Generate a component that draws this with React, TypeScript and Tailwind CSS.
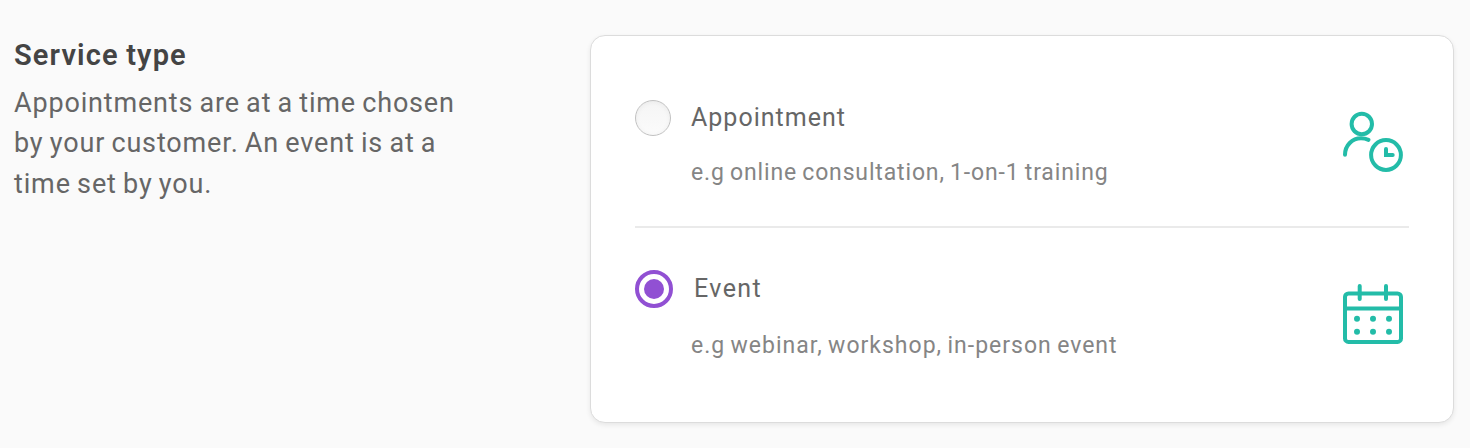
import type { ReactNode } from "react";

function AppointmentIcon() {
  return (
    <svg width="64" height="64" viewBox="0 0 64 64" fill="none" stroke="#23bca8" strokeWidth="4" strokeLinecap="round">
      <circle cx="20.8" cy="14" r="10.2" />
      <path d="M4 44.800C4 35.500 11.200 28.200 20 28.200C22.700 28.200 25.200 28.800 27.500 29.800" />
      <circle cx="45" cy="45" r="14.900" />
      <path d="M45 39V45H51.700" strokeLinejoin="miter" />
    </svg>
  );
}

function CalendarIcon() {
  return (
    <svg width="64" height="64" viewBox="0 0 64 64" fill="none" stroke="#23bca8" strokeWidth="4" strokeLinecap="round">
      <rect x="4" y="11.400" width="56" height="48.500" rx="3.500" />
      <path d="M4 26.500H60M18.700 4V17M45 4V17" />
      <g fill="#23bca8" stroke="none">
        <circle cx="16" cy="36.700" r="3" />
        <circle cx="32" cy="36.700" r="3" />
        <circle cx="48" cy="36.700" r="3" />
        <circle cx="16" cy="49.700" r="3" />
        <circle cx="32" cy="49.700" r="3" />
        <circle cx="48" cy="49.700" r="3" />
      </g>
    </svg>
  );
}

function Radio({ checked }: { checked: boolean }) {
  return checked ? (
    <span role="radio" aria-checked="true" className="flex size-[38px] shrink-0 items-center justify-center rounded-full border-4 border-[#9150d3] bg-white">
      <span className="size-5 rounded-full bg-[#9150d3]" />
    </span>
  ) : (
    <span role="radio" aria-checked="false" className="size-9 shrink-0 rounded-full border border-[#c2c2c2] bg-linear-to-b from-[#f5f5f5] to-[#fbfbfb] shadow-[inset_0_1px_5px_rgba(0,0,0,0.05)]" />
  );
}

function Option({ control, label, note, icon, className }: { control: ReactNode; label: ReactNode; note: ReactNode; icon: ReactNode; className: string }) {
  return (
    <div className={`flex items-start justify-between ${className}`}>
      <div>
        <div className="flex h-[38px] items-start">
          {control}
          {label}
        </div>
        {note}
      </div>
      {icon}
    </div>
  );
}

export default function App() {
  return (
    <main className="flex h-[448px] w-[1470px] items-start bg-[#fafafa] font-['Roboto',sans-serif]">
      <section className="w-[590px] shrink-0 pt-[35px] pl-[14px]">
        <h2 className="text-[29px] leading-10 font-semibold tracking-[1.15px] [word-spacing:-1px] whitespace-nowrap text-[#444]">
          <span>Service type</span>
        </h2>
        <p className="mt-[7.500px] text-[27px] leading-[40.500px] whitespace-nowrap text-[#666]">
          <span className="tracking-[0.83px] [word-spacing:-1.3px]">Appointments are at a time chosen</span>
          <br />
          <span className="tracking-[0.85px] [word-spacing:-1.3px]">by your customer. An event is at a</span>
          <br />
          <span className="tracking-[0.86px] [word-spacing:-1.3px]">time set by you.</span>
        </p>
      </section>
      <section role="radiogroup" className="mt-[35px] h-[388px] w-[864px] rounded-[15px] border border-[#dcdcdc] bg-white px-11 shadow-[0_2px_5px_rgba(0,0,0,0.08)]">
        <Option
          className="h-[192px] border-b-2 border-[#eaeaea] pt-16"
          control={<Radio checked={false} />}
          label={<span className="ml-5 text-[25px] leading-9 tracking-[1px] text-[#666]">Appointment</span>}
          note={<p className="mt-[17px] ml-14 text-[23px] leading-9 tracking-[0.85px] [word-spacing:-1.3px] text-[#858585]">e.g online consultation, 1-on-1 training</p>}
          icon={<div className="mt-[10px] mr-[4px]"><AppointmentIcon /></div>}
        />
        <Option
          className="pt-[42px]"
          control={<Radio checked />}
          label={<span className="mt-px ml-[21px] text-[25px] leading-9 tracking-[1.4px] text-[#666]">Event</span>}
          note={<p className="mt-[20px] ml-14 text-[23px] leading-9 tracking-[1px] [word-spacing:-1.3px] text-[#858585]">e.g webinar, workshop, in-person event</p>}
          icon={<div className="mt-[12px] mr-[4px]"><CalendarIcon /></div>}
        />
      </section>
    </main>
  );
}
